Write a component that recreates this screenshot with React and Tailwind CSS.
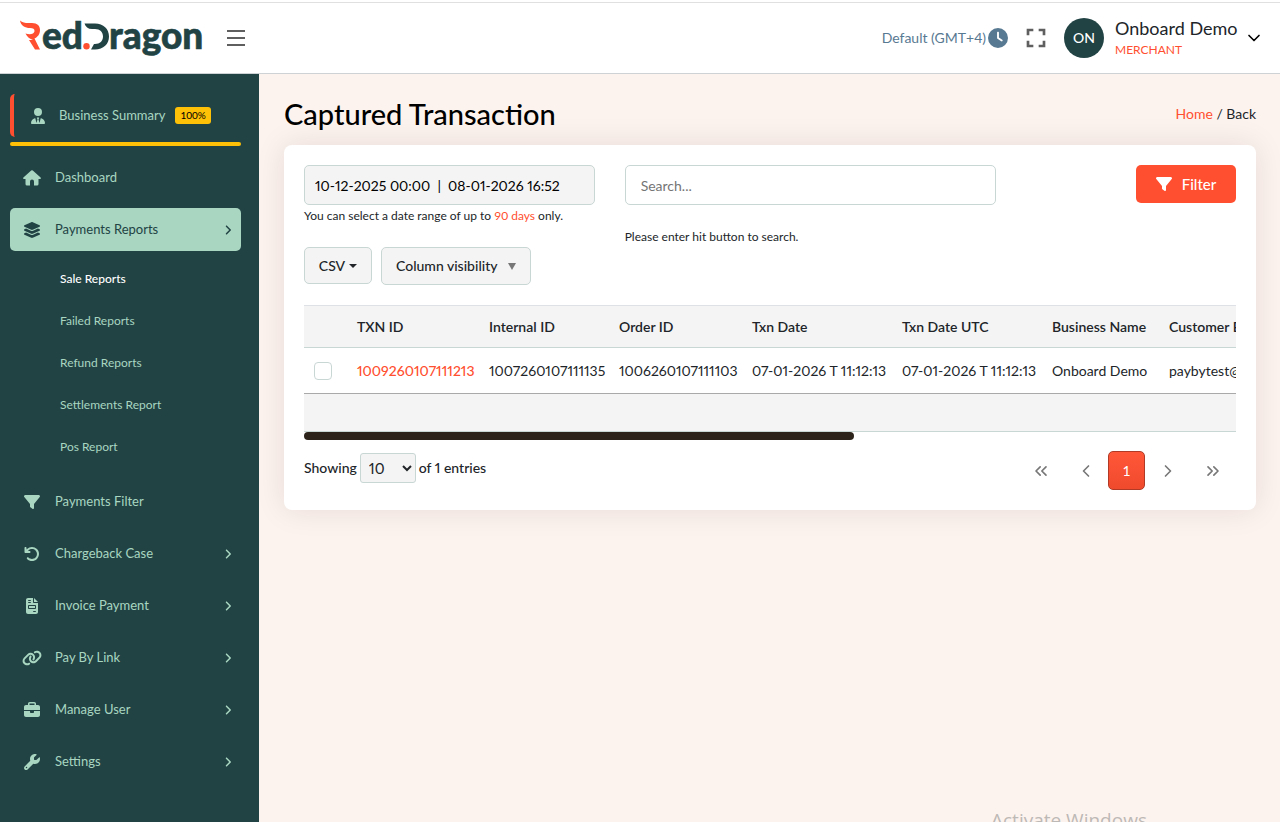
import React, { useState } from 'react';
import {
  FaUserTie,
  FaLayerGroup,
  FaFilter,
  FaArrowRotateLeft,
  FaFileInvoice,
  FaLink,
  FaBriefcase,
  FaWrench,
  FaAngleRight,
  FaClock,
} from 'react-icons/fa6';
import { MdFullscreen } from 'react-icons/md';
import { ChevronDown, ChevronLeft, ChevronRight, ChevronsLeft, ChevronsRight } from 'lucide-react';

const reports = ['Sale Reports', 'Failed Reports', 'Refund Reports', 'Settlements Report', 'Pos Report'];

const menu = [
  { label: 'Payments Filter', icon: FaFilter },
  { label: 'Chargeback Case', icon: FaArrowRotateLeft, arrow: true },
  { label: 'Invoice Payment', icon: FaFileInvoice, arrow: true },
  { label: 'Pay By Link', icon: FaLink, arrow: true },
  { label: 'Manage User', icon: FaBriefcase, arrow: true },
  { label: 'Settings', icon: FaWrench, arrow: true },
];

const columns = ['TXN ID', 'Internal ID', 'Order ID', 'Txn Date', 'Txn Date UTC', 'Business Name', 'Customer Email'];

const rows = [
  ['1009260107111213', '1007260107111135', '1006260107111103', '07-01-2026 T 11:12:13', '07-01-2026 T 11:12:13', 'Onboard Demo', 'paybytest@'],
];

const Logo = () => (
  <svg width="187" height="60" viewBox="0 -10 187 60" role="img" aria-label="RedDragon">
    <path
      fill="#ff4f30"
      d="M0 2.500 C3 5.500 7 5 12 5 C17.500 5 20 8 20 12 C20 16.500 17.500 19 14.500 20.500 L20 31.500 H15 L9 22 H13 C10 21 7 19 5.500 15.500 C9.500 17 14 16.500 14.500 13.300 C14.800 11 13 10 10 10 C5 10 1 8 0 2.500 Z"
    />
    <g fontFamily="Lato, sans-serif" fontWeight="900" fontSize="37" fill="#224344" stroke="#224344" strokeWidth="0.6">
      <text x="22" y="31">ed</text>
      <text x="89" y="31">ragon</text>
    </g>
    <circle cx="66.500" cy="28.300" r="3.200" fill="#ff4f30" />
    <path
      fill="#224344"
      d="M64.500 5.500 H75 C83.500 5.500 89 11 89 18.500 C89 26 83.500 31.500 75 31.500 H71 L74 26 H75 C80 26 83 23 83 18.500 C83 14 80 11 75 11 H72 C68 11 65.500 9 64.500 5.500 Z"
    />
  </svg>
);

const HomeIcon = ({ className }) => (
  <svg viewBox="0 0 18 16" fill="currentColor" className={className}>
    <path d="M8.200 0.500 a1.200 1.200 0 0 1 1.600 0 L17.600 7.400 c.7.700.3 1.600-.6 1.600 H15.500 V14 a1.500 1.500 0 0 1-1.500 1.500 H11 V11.500 a2 2 0 0 0-4 0 V15.500 H4 A1.500 1.500 0 0 1 2.500 14 V9 H1 C.1 9-.3 8.100.4 7.400 Z" />
  </svg>
);

const Header = () => (
  <div className="pt-0.5 bg-white">
    <header className="flex items-center justify-between h-[72px] pl-5 pr-4 border-y border-[#cfd2d4] border-t-[#e0e0e0]">
      <div className="flex items-center gap-5">
        <Logo />
        <button type="button" aria-label="Toggle menu" className="flex flex-col gap-[5px] py-2">
          <span className="w-[18px] h-0.5 bg-[#5f5f5f]" />
          <span className="w-[18px] h-0.5 bg-[#5f5f5f]" />
          <span className="w-[18px] h-0.5 bg-[#5f5f5f]" />
        </button>
      </div>
      <div className="flex items-center">
        <a href="#timezone" className="flex items-center gap-0.5 text-sm text-[#587992]">
          Default (GMT+4)
          <FaClock className="size-5" />
        </a>
        <button type="button" aria-label="Full screen" className="ml-3 text-[#5f5f5f]">
          <MdFullscreen className="size-8" />
        </button>
        <button type="button" className="flex items-center ml-3 text-left">
          <span className="flex items-center justify-center size-10 rounded-full bg-[#224344] text-white text-sm font-medium">ON</span>
          <span className="flex flex-col ml-[11px] w-[122px] whitespace-nowrap">
            <span className="text-lg leading-6 text-[#212529]">Onboard Demo</span>
            <span className="text-xs leading-5 text-[#ff4f30]">MERCHANT</span>
          </span>
          <ChevronDown className="ml-[7px] size-5 text-black" />
        </button>
      </div>
    </header>
  </div>
);

const NavItem = ({ label, icon: Icon, arrow, active }) => (
  <li>
    <a
      href="#menu"
      className={`flex items-center h-[43px] pl-3 pr-[7px] rounded-[5px] text-[13px] ${
        active ? 'bg-[#a8d6c1] text-[#224344]' : 'text-[#a8d6c1]'
      }`}
    >
      <Icon className="w-5 h-4 mr-[13px]" />
      <span className="flex-1">{label}</span>
      {arrow && <FaAngleRight className="size-3" />}
    </a>
  </li>
);

const Sidebar = () => (
  <aside className="w-[259px] shrink-0 bg-[#224344] pt-5 pl-[10px] pr-[18px]">
    <a href="#summary" className="flex items-center h-[43px] pl-4 border-l-4 border-[#ff4f30] rounded-[5px] text-[13px] text-[#a8d6c1]">
      <FaUserTie className="size-4 mr-[13px]" />
      Business Summary
      <span className="ml-[10px] px-[5px] rounded-[3px] bg-[#ffc107] text-[10px] leading-[17px] text-black">100%</span>
    </a>
    <div className="h-1 mt-[5px] rounded-full bg-[#ffc107]" />
    <ul className="flex flex-col gap-[9px] mt-[10px]">
      <NavItem label="Dashboard" icon={HomeIcon} />
      <NavItem label="Payments Reports" icon={FaLayerGroup} arrow active />
    </ul>
    <ul className="mt-[7px] mb-3">
      {reports.map((name, i) => (
        <li key={name}>
          <a
            href="#report"
            className={`flex items-center h-[42px] pl-[50px] text-xs ${i === 0 ? 'text-white font-medium' : 'text-[#a8d6c1]'}`}
          >
            {name}
          </a>
        </li>
      ))}
    </ul>
    <ul className="flex flex-col gap-[9px]">
      {menu.map((item) => (
        <NavItem key={item.label} {...item} />
      ))}
    </ul>
  </aside>
);

const TransactionTable = () => (
  <div className="mt-5">
    <div className="overflow-x-auto [scrollbar-width:none]">
      <table className="table-fixed w-[1588px] text-sm text-left text-[#212529] border-separate border-spacing-0">
        <colgroup>
          <col className="w-[43px]" />
          <col className="w-[132px]" />
          <col className="w-[130px]" />
          <col className="w-[133px]" />
          <col className="w-[150px]" />
          <col className="w-[150px]" />
          <col className="w-[117px]" />
          <col />
        </colgroup>
        <thead>
          <tr className="h-[43px] bg-[#f4f4f4]">
            <th className="border-y border-[#c8d6d4] border-t-[#dee2e6]" />
            {columns.map((name) => (
              <th key={name} className="px-[10px] font-semibold whitespace-nowrap border-y border-[#c8d6d4] border-t-[#dee2e6]">
                {name}
              </th>
            ))}
          </tr>
        </thead>
        <tbody>
          {rows.map((row) => (
            <tr key={row[0]} className="h-[46px] proportional-nums">
              <td className="pl-[10px] border-b border-[#a9a9a9]">
                <input
                  type="checkbox"
                  aria-label={`Select ${row[0]}`}
                  className="block appearance-none size-[18px] rounded-[4px] border border-[#c8d6d4] bg-white checked:bg-[#ff4f30]"
                />
              </td>
              {row.map((cell, i) => (
                <td key={columns[i]} className="px-[10px] whitespace-nowrap border-b border-[#a9a9a9]">
                  {i === 0 ? <a href="#txn" className="font-medium text-[#ff4f30]">{cell}</a> : cell}
                </td>
              ))}
            </tr>
          ))}
        </tbody>
        <tfoot>
          <tr className="h-[38px] bg-[#f4f4f4]">
            <td colSpan={8} className="border-b border-[#c8d6d4]" />
          </tr>
        </tfoot>
      </table>
    </div>
    <div className="h-2 w-[59%] rounded-full bg-[#2c241b]" />
  </div>
);

const Pagination = () => (
  <nav aria-label="Pages" className="flex items-center text-sm text-[#777]">
    <button type="button" aria-label="First page" className="flex justify-center w-[45px]"><ChevronsLeft className="size-5" /></button>
    <button type="button" aria-label="Previous page" className="flex justify-center w-[45px]"><ChevronLeft className="size-5" /></button>
    <button type="button" className="w-[37px] h-[39px] rounded-[5px] border border-[#b03a26] bg-linear-to-b from-[#ff5738] to-[#f04a2d] text-white">1</button>
    <button type="button" aria-label="Next page" className="flex justify-center w-[45px]"><ChevronRight className="size-5" /></button>
    <button type="button" aria-label="Last page" className="flex justify-center w-[46px]"><ChevronsRight className="size-5" /></button>
  </nav>
);

const App = () => {
  const [search, setSearch] = useState('');
  const [range, setRange] = useState('10-12-2025 00:00  |  08-01-2026 16:52');
  const [size, setSize] = useState('10');

  return (
    <div className="flex flex-col min-h-screen overflow-hidden bg-[#fdf3ee] font-[Lato,sans-serif] text-[#212529]">
      <Header />
      <div className="flex flex-1">
        <Sidebar />
        <main className="relative flex-1 min-w-0 pt-5 pl-[25px] pr-6">
          <div className="flex items-center justify-between h-10">
            <h1 className="text-[29px] leading-10 font-medium text-black">Captured Transaction</h1>
            <p className="text-sm">
              <a href="#home" className="text-[#ff4f30]">Home</a> / <a href="#back">Back</a>
            </p>
          </div>

          <section className="mt-[11px] p-5 bg-white rounded-lg shadow-[0_0_30px_rgba(34,20,10,0.1)]">
            <div className="grid grid-cols-12 gap-x-[30px]">
              <div className="col-span-4">
                <input
                  value={range}
                  onChange={(e) => setRange(e.target.value)}
                  aria-label="Date range"
                  className="block w-full h-10 px-[10px] rounded-[5px] border border-[#c8d6d4] bg-[#f4f4f4] text-sm text-black whitespace-pre proportional-nums"
                />
                <p className="mt-0.5 text-xs leading-[18px]">
                  You can select a date range of up to <span className="text-[#ff4f30]">90 days</span> only.
                </p>
              </div>
              <div className="col-span-5">
                <input
                  value={search}
                  onChange={(e) => setSearch(e.target.value)}
                  placeholder="Search..."
                  aria-label="Search"
                  className="block w-full h-10 px-[15px] rounded-[5px] border border-[#c8d6d4] text-sm placeholder:text-[#757575]"
                />
                <p className="mt-[23px] -mb-6 text-xs leading-[18px]">Please enter hit button to search.</p>
              </div>
              <div className="col-span-3 flex justify-end items-start">
                <button type="button" className="flex items-center justify-center gap-[10px] w-[100px] h-[38px] rounded-[5px] bg-[#ff4f30] text-white text-[15px] font-medium">
                  <FaFilter className="size-4" />
                  Filter
                </button>
              </div>
            </div>

            <div className="flex gap-[9px] mt-[22px] text-sm font-medium">
              <button type="button" className="flex items-center justify-center gap-1 w-[68px] h-[37px] rounded-[5px] border border-[#c8d6d4] bg-[#f4f4f4]">
                CSV
                <span className="border-x-4 border-t-4 border-x-transparent border-t-[#212529]" />
              </button>
              <button type="button" className="flex items-center justify-between w-[150px] h-[38px] px-[14px] rounded-[5px] border border-[#c8d6d4] bg-[#f4f4f4]">
                Column visibility
                <span className="border-x-4 border-t-[7px] border-x-transparent border-t-[#777]" />
              </button>
            </div>

            <TransactionTable />

            <div className="flex items-start justify-between mt-[11px]">
              <div className="flex items-center gap-[3px] pt-0.5 text-sm font-medium proportional-nums">
                <label htmlFor="page-size">Showing</label>
                <select
                  id="page-size"
                  value={size}
                  onChange={(e) => setSize(e.target.value)}
                  className="w-14 h-[30px] pl-1 rounded-[3px] border border-[#c8d6d4] bg-[#f4f4f4] text-[15px] font-normal"
                >
                  <option>10</option>
                  <option>25</option>
                  <option>50</option>
                </select>
                <span>of 1 entries</span>
              </div>
              <Pagination />
            </div>
          </section>

          <p className="absolute left-[732px] -bottom-3 font-['Open_Sans',sans-serif] text-[19px] leading-7 text-[#bdb9b6]">Activate Windows</p>
        </main>
      </div>
    </div>
  );
};

export default App;
